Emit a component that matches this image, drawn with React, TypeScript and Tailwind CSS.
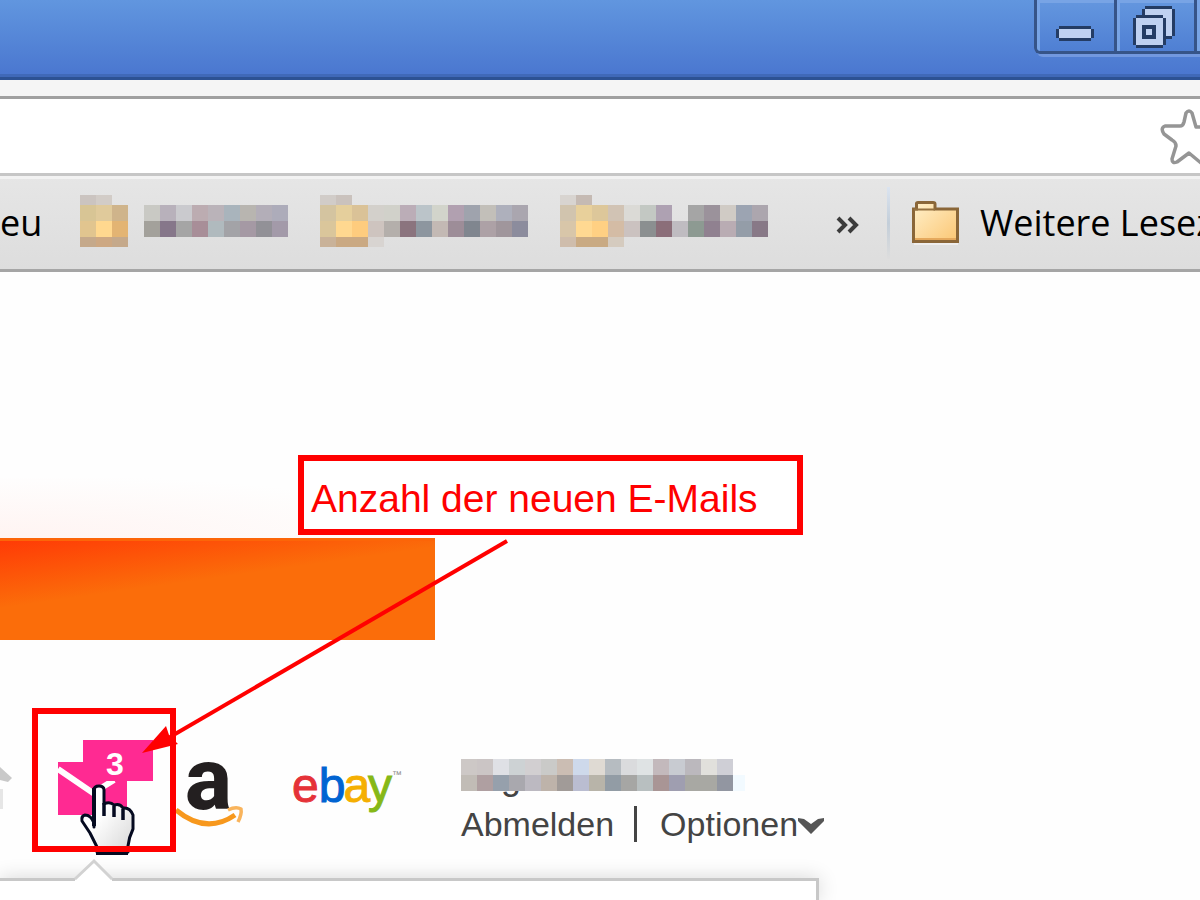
import clsx from "clsx";

type Cell = string | null;

const BOOKMARKS: { id: string; label: string; rows: Cell[][] }[] = [
  {
    id: "one",
    label: "Lesezeichen 1",
    rows: [
      ["#cbc4c0", "#d2ccc7"],
      ["#d8c595", "#e0ca9b", "#cfb48b", null, "#c9c9c4", "#b8b1bb", "#cacace", "#bcacb1", "#bab3b9", "#a9b4bc", "#b8b5b0", "#b3aeb8", "#adacba"],
      ["#e1c58f", "#ffd88f", "#e3b473", null, "#a3a19b", "#86778a", "#a5a5a5", "#a88e98", "#b0babe", "#a3a3a7", "#a599a4", "#929197", "#a39aa9"],
      ["#c5a98b", "#cda883", "#c5a98b"],
    ],
  },
  {
    id: "two",
    label: "Lesezeichen 2",
    rows: [
      ["#d1ccc8", "#cac2bd"],
      ["#d4c4a0", "#e5cf9c", "#dac297", "#d3d0cb", "#d1d1ca", "#bbadb7", "#bbc4c9", "#d2d4cb", "#b1a0b0", "#9fa3ad", "#c2bfb9", "#aeb0bc", "#aaa6af"],
      ["#dac69b", "#ffd890", "#fecc7e", "#cec4bf", "#b4afab", "#8b747e", "#8d969f", "#c3b9b4", "#9d8d98", "#80868f", "#ada1a6", "#a0969c", "#8c8c9d"],
      ["#c9b299", "#caa983", "#caa983", "#d8d4d1"],
    ],
  },
  {
    id: "three",
    label: "Lesezeichen 3",
    rows: [
      ["#d8d4d0", "#c5bab3"],
      ["#d1c4ae", "#e8d09b", "#ddc79a", "#d1c3b4", "#dbdad6", "#c3c8c3", "#aea1b2", null, "#a5a5a5", "#9b929b", "#d0cbc5", "#9ca4b2", "#aca6ae"],
      ["#d8c6a9", "#ffd992", "#ffd083", "#d4bca5", "#cbc2c0", "#8b8f90", "#8b6e79", "#bfbcc1", "#8d9a92", "#908190", "#b9acb3", "#949da8", "#887987"],
      ["#cfbdac", "#c9aa83", "#c9aa83", "#d5cbbf"],
    ],
  },
];

const ACCOUNT_ROWS: Cell[][] = [
  ["#cdc8c6", "#cbc5c5", "#dfe0e5", "#cdd2d4", "#d2cfd1", "#cacac8", "#cbbdb3", "#ced9eb", "#dfdad3", "#b6bcc1", "#dadbdd", "#dfe3e4", "#c3b9bc", "#c8cbd1", "#bbb8bd", "#e1e0dc", "#cfcfd6"],
  ["#c1bcb6", "#af9fa1", "#96a0ac", "#a9a8ae", "#bcb9c1", "#beb3aa", "#a19b98", "#babdd1", "#b8b4a9", "#929ca5", "#a6a6a4", "#b8bfc0", "#a99595", "#9f9eb0", "#a8a8a3", "#a8a8a3", "#9296a1"],
];

const ROW_Y = [0, 10, 26, 42];
const ROW_H = [10, 16, 16, 10];

function BookmarkMosaic({ rows }: { rows: Cell[][] }) {
  return (
    <svg viewBox="0 0 240 56" className="h-14 w-60" shapeRendering="crispEdges" aria-hidden="true">
      {rows.map((row, y) =>
        row.map((fill, x) =>
          fill ? (
            <rect key={`${y}-${x}`} x={x * 16} y={ROW_Y[y]} width={16} height={ROW_H[y]} fill={fill} />
          ) : null,
        ),
      )}
    </svg>
  );
}

function WindowButton({ label, className, children }: { label: string; className?: string; children?: React.ReactNode }) {
  return (
    <button
      type="button"
      aria-label={label}
      className={clsx(
        "h-[54px] shrink-0 border-b-[3px] border-l-[3px] border-[#365488] bg-linear-to-b from-[#6497df] to-[#4f7fd3] shadow-[inset_3px_3px_0_#78a4e5]",
        className,
      )}
    >
      {children}
    </button>
  );
}

function TitleBar() {
  return (
    <header className="flex h-20 shrink-0 items-start justify-end border-b-[3px] border-[#2d5294] bg-linear-to-b from-[#6196df] to-[#4a76cf] shadow-[inset_0_-3px_0_#4069b8]">
      <div className="flex w-[166px] overflow-hidden rounded-bl-md shadow-[3px_3px_0_#7298df]">
        <WindowButton label="Minimieren" className="w-20 rounded-bl-md">
          <svg viewBox="0 0 77 51" className="h-[51px] w-[77px]">
            <path d="M22 26h32v3h3v9h-3v3H22v-3h-3v-9h3z" fill="#243c64" />
            <path d="M22 29h32v9H22z" fill="#bfd1f1" />
          </svg>
        </WindowButton>
        <WindowButton label="Wiederherstellen" className="w-20">
          <svg viewBox="0 0 77 51" className="h-[51px] w-[77px]">
            <path d="M28 6h27v3h3v27h-3v3H28v-3h-3V9h3z" fill="#243c64" />
            <path d="M28 9h27v27H28z" fill="#bfd1f1" />
            <path d="M19 15h27v3h3v27h-3v3H19v-3h-3V18h3z" fill="#243c64" />
            <path d="M19 18h27v27H19z" fill="#bfd1f1" />
            <path d="M25 25h14v14H25z" fill="#243c64" />
            <path d="M29 29h6v6h-6z" fill="#bfd1f1" />
          </svg>
        </WindowButton>
        <WindowButton label="Schließen" className="w-20" />
      </div>
    </header>
  );
}

function AddressBar() {
  return (
    <div className="shrink-0 bg-[#f5f5f5] pt-4">
      <div className="flex h-20 items-center border-y-[3px] border-t-[#a0a0a0] border-b-[#c6c6c6] bg-white">
        <input type="text" aria-label="Adresse" className="h-full min-w-0 flex-1 bg-white outline-none" />
        <button type="button" aria-label="Lesezeichen setzen" className="shrink-0">
          <svg viewBox="1160 106 40 60" className="h-[60px] w-10" fill="none" stroke="#959595" strokeWidth="3.5" strokeLinejoin="round">
            <path d="M1186 113q3-4 6 0l4 14h17q5 2 2 7l-12 9 4 16q-1 5-6 4l-12-10-12 9q-5 2-5-3l4-13q0-4-4-6l-8-6q-4-6 1-8h15q3 0 4-4z" />
          </svg>
        </button>
      </div>
    </div>
  );
}

function FolderIcon() {
  return (
    <svg viewBox="0 0 49 46" className="h-[46px] w-[49px] shrink-0" aria-hidden="true">
      <defs>
        <linearGradient id="folder" x1="0" y1="0" x2="1" y2="1">
          <stop offset="0" stopColor="#fff0cb" />
          <stop offset="1" stopColor="#fbc673" />
        </linearGradient>
      </defs>
      <path d="M3 43h44v2H3z" fill="#efeeee" />
      <path d="M5.500 9V3.500Q5.500 2.500 7 2.500H22Q24 2.500 24 4V9H46.500V41.500H2.500V9z" fill="url(#folder)" stroke="#8a6638" strokeWidth="3" />
      <path d="M3 9.500h21" stroke="#94703f" strokeWidth="2" />
      <path d="M4 39h41" stroke="#e5a95d" strokeWidth="2" />
    </svg>
  );
}

function BookmarksBar() {
  return (
    <nav
      aria-label="Lesezeichen"
      className="flex h-24 shrink-0 items-center overflow-hidden border-b-[3px] border-[#a5a5a5] bg-linear-to-b from-[#e6e6e6] to-[#dddddd] font-['Open_Sans','Noto_Sans',sans-serif] text-[36px] leading-[48px] whitespace-nowrap text-black shadow-[inset_0_3px_0_#f2f2f2]"
    >
      <a href="#neu" className="w-20 shrink-0">eu</a>
      {BOOKMARKS.map((b) => (
        <a key={b.id} href={`#${b.id}`} aria-label={b.label} className="shrink-0">
          <BookmarkMosaic rows={b.rows} />
        </a>
      ))}
      <button type="button" aria-label="Weitere anzeigen" className="ml-9 shrink-0">
        <svg viewBox="0 0 24 24" className="size-6" fill="none" stroke="#3c3c3c" strokeWidth="4">
          <path d="M2 7l7 7-7 7M13 7l7 7-7 7" />
        </svg>
      </button>
      <span className="ml-[27px] h-[72px] w-[3px] shrink-0 bg-linear-to-b from-[#dbe4f0] via-[#c3ced9] to-[#dddddd]" />
      <a href="#weitere" className="ml-[21px] flex shrink-0 items-center gap-5">
        <FolderIcon />
        Weitere Lesez
      </a>
    </nav>
  );
}

function MailButton() {
  return (
    <button type="button" aria-label="3 neue E-Mails" className="shrink-0">
      <svg viewBox="57 739 98 78" className="h-[78px] w-[98px]">
        <path d="M58 762H127V815H58z" fill="#ff2a92" />
        <path d="M58 769L93 793L114 780" fill="none" stroke="#fff" strokeWidth="6" />
        <path d="M83 740H153V781H83z" fill="#ff2a92" />
        <text x="106" y="775" fill="#fff" fontFamily="Liberation Sans, sans-serif" fontWeight="700" fontSize="32">3</text>
      </svg>
    </button>
  );
}

function AmazonLink() {
  return (
    <a href="#amazon" aria-label="Amazon" className="shrink-0">
      <svg viewBox="176 740 70 92" className="h-[92px] w-[70px] overflow-visible">
        <text x="185" y="810" fill="#231f20" fontFamily="Roboto, 'Liberation Sans', sans-serif" fontWeight="800" fontSize="88">a</text>
        <path d="M176 811Q206 836 235 816" fill="none" stroke="#f7981d" strokeWidth="5" />
        <path d="M228 811q8-4 13-1 1 5-3 13" fill="none" stroke="#f9b45c" strokeWidth="3.500" />
      </svg>
    </a>
  );
}

function EbayLink() {
  return (
    <a href="#ebay" className="flex shrink-0 text-[48px] leading-[50px]">
      <span className="text-[#e53238] [-webkit-text-stroke:1px_#e53238]">e</span>
      <span className="text-[#0064d2] [-webkit-text-stroke:1px_#0064d2]">b</span>
      <span className="-ml-0.5 text-[#f5af02] [-webkit-text-stroke:1px_#f5af02]">a</span>
      <span className="-ml-0.5 text-[#86b817] [-webkit-text-stroke:1px_#86b817]">y</span>
      <span className="text-[10px] leading-7 text-[#888888]">™</span>
    </a>
  );
}

function Account() {
  return (
    <div className="shrink-0 text-[34px] leading-[44px] text-[#444444]">
      <svg viewBox="0 0 290 43" className="h-[43px] w-[290px]" shapeRendering="crispEdges" role="img" aria-label="Benutzername">
        <text x="40" y="30" fill="#444" fontFamily="Liberation Sans, sans-serif" fontSize="36">g</text>
        {ACCOUNT_ROWS.map((row, y) =>
          row.map((fill, x) => <rect key={`${y}-${x}`} x={x * 16} y={y * 16} width={16} height={16} fill={fill ?? "none"} />),
        )}
        <path d="M272 16h12v16h-12z" fill="#f2faff" />
      </svg>
      <div className="flex items-center">
        <a href="#abmelden">Abmelden</a>
        <span className="mr-[23px] ml-5 h-9 w-[3px] bg-[#444444]" />
        <button type="button" className="flex items-center">
          Optionen
          <svg viewBox="0 0 26 22" className="h-[22px] w-[26px]" fill="#555">
            <path d="M0 5l6 1 7 5 7-5 6-1v3L13 21 0 8z" />
          </svg>
        </button>
      </div>
    </div>
  );
}

function HandCursor() {
  return (
    <svg viewBox="78 782 60 74" className="pointer-events-none absolute top-[510px] left-[78px] h-[74px] w-[60px]" aria-hidden="true">
      <defs>
        <linearGradient id="hand" x1="0" y1="0" x2="1" y2="1">
          <stop offset="0.4" stopColor="#fff" />
          <stop offset="1" stopColor="#d6d6d6" />
        </linearGradient>
      </defs>
      <path
        d="M94 827V790q0-4 5-4t5 4v14q6-3 10 1 6-2 9 3 7-1 10 7v14q-4 8-5 17v6H97v-5L90 833 82 821q-1-5 3-6 6 0 9 8z"
        fill="url(#hand)"
        stroke="#050a20"
        strokeWidth="3"
        strokeLinejoin="round"
      />
      <path d="M104 803v13M114 806v11M123 809v11" stroke="#050a20" strokeWidth="3.500" />
      <path d="M94 788v38" stroke="#050a20" strokeWidth="4" />
      <path d="M96 851h32v4H96z" fill="#050a20" />
    </svg>
  );
}

function Annotations() {
  return (
    <>
      <div className="absolute top-[183px] left-[298px] flex h-20 w-[505px] items-center border-[6px] border-[#ff0000] bg-white pt-2 pl-[7px] text-[39px] leading-[44px] whitespace-nowrap text-[#ff0000]">
        Anzahl der neuen E-Mails
      </div>
      <div className="pointer-events-none absolute top-[436px] left-8 size-36 border-[6px] border-[#ff0000]" />
      <svg viewBox="140 538 372 220" className="pointer-events-none absolute top-[266px] left-[140px] h-[220px] w-[372px]" aria-hidden="true">
        <path d="M507 541L170 737" stroke="#f00" strokeWidth="4" />
        <path d="M142 753L166 726 169 735 178 744z" fill="#f00" />
      </svg>
    </>
  );
}

export default function App() {
  return (
    <div className="flex h-screen flex-col overflow-hidden bg-white font-['Liberation_Sans',Arial,sans-serif]">
      <TitleBar />
      <AddressBar />
      <BookmarksBar />
      <main className="relative flex min-h-0 flex-1 flex-col overflow-hidden bg-[#fefefe]">
        <div className="mt-[206px] h-[60px] w-[435px] shrink-0 bg-[radial-gradient(ellipse_at_bottom_left,#fff4f2,#fefefe_75%)]" />
        <div className="h-[102px] w-[435px] shrink-0 border-t-[3px] border-[#fc6508] bg-[linear-gradient(172deg,#ff3b06,#fb6d0a_42%)]" />
        <div className="flex h-[238px] shrink-0 items-start pt-[99px]">
          <svg viewBox="0 760 57 52" className="mt-5 h-[52px] w-[57px] shrink-0" aria-hidden="true">
            <path d="M0 768l12 11-4 4-8-2z" fill="#c9c9c9" />
            <path d="M0 790h3v20H0z" fill="#e6e6e6" />
          </svg>
          <MailButton />
          <div className="w-[21px] shrink-0" />
          <AmazonLink />
          <div className="mt-[22px] ml-[46px] w-[169px] shrink-0">
            <EbayLink />
          </div>
          <div className="mt-5">
            <Account />
          </div>
        </div>
        <section
          aria-label="Posteingang"
          className="relative w-[819px] flex-1 border-t-[3px] border-r-[3px] border-[#c8c8c8] bg-white shadow-[0_0_20px_rgba(0,0,0,0.16)]"
        >
          <svg viewBox="0 0 40 24" className="absolute -top-[23px] left-[74px] h-6 w-10" aria-hidden="true">
            <path d="M1 22L20 3 38 22v2H1z" fill="#fff" />
            <path d="M1 21L20 3 38 21" fill="none" stroke="#d2d2d2" strokeWidth="3" />
          </svg>
        </section>
        <HandCursor />
        <Annotations />
      </main>
    </div>
  );
}
